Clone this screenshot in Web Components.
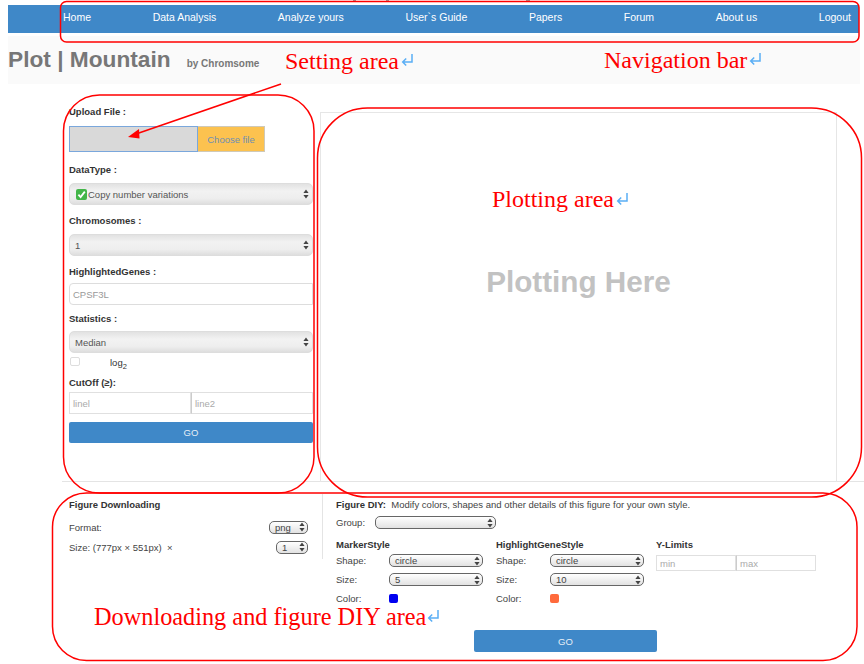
<!DOCTYPE html>
<html>
<head>
<meta charset="utf-8">
<title>Plot | Mountain</title>
<style>
  html, body { margin: 0; background: #fff; }
  body { font-family: "Liberation Sans", Arial, sans-serif; color: #333; }
</style>
</head>
<body>
<plot-page>
  <nav-bar></nav-bar>
  <title-band></title-band>
  <div slot="settings">
    <form-field label="Upload File :" top="21" gap="7"><file-box></file-box></form-field>
    <form-field label="DataType :" top="11">
      <big-select text="Copy number variations" check></big-select>
    </form-field>
    <form-field label="Chromosomes :" top="9"><big-select text="1"></big-select></form-field>
    <form-field label="HighlightedGenes :" top="9" gap="4"><text-box text="CPSF3L"></text-box></form-field>
    <form-field label="Statistics :" top="7" gap="5"><big-select text="Median"></big-select></form-field>
    <log-check></log-check>
    <form-field label="CutOff (≥):" top="4" gap="2"><pair-box a="linel" b="line2" h="22"></pair-box></form-field>
    <go-button width="244" height="21" top="8"></go-button>
  </div>
  <plot-area slot="plot"></plot-area>
  <bottom-tools slot="bottom"></bottom-tools>
  <red-notes></red-notes>
</plot-page>

<script>
//contenedor de toda la pagina
class PlotPage extends HTMLElement {
    constructor() {
        super();
        this.attachShadow({mode: "open"});
        this.shadowRoot.innerHTML = `
            <style>
                :host { display: block; position: relative; width: 864px; height: 664px; overflow: hidden; }
                .main { display: flex; height: 398px; border-bottom: 1px solid #e4e4e4; margin: 0 0 0 62px; width: 802px; box-sizing: border-box; }
                .left { width: 251px; padding-left: 7px; box-sizing: border-box; flex: none; }
                .right { padding: 28px 0 0 7px; flex: none; }
            </style>
            <slot></slot>
            <div class="main">
                <div class="left"><slot name="settings"></slot></div>
                <div class="right"><slot name="plot"></slot></div>
            </div>
            <slot name="bottom"></slot>
        `;
    }
}

class NavBar extends HTMLElement {
    constructor() {
        super();
        this.attachShadow({mode: "open"});
        const items = ["Home", "Data Analysis", "Analyze yours", "User`s Guide", "Papers", "Forum", "About us", "Logout"];
        this.shadowRoot.innerHTML = `
            <style>
                :host { display: block; padding: 5px 0 0 8px; width: 851px; }
                nav { display: flex; justify-content: space-between; height: 28px; box-sizing: border-box;
                      padding: 6px 8px 0 55px; background: #3f88c8; color: #fff; font-size: 10.5px; line-height: 13px; }
            </style>
            <nav>${items.map(i => `<span>${i}</span>`).join("")}</nav>
        `;
    }
}

class TitleBand extends HTMLElement {
    constructor() {
        super();
        this.attachShadow({mode: "open"});
        this.shadowRoot.innerHTML = `
            <style>
                :host { display: flex; align-items: baseline; margin: 3px 0 0 8px; width: 852px; height: 48px;
                        box-sizing: border-box; padding-top: 8px; background: #fafafa; color: #777; }
                h1 { margin: 0; font-size: 22.7px; line-height: 30px; font-weight: bold; }
                small { margin-left: 16px; font-size: 10px; font-weight: bold; }
            </style>
            <h1>Plot | Mountain</h1><small>by Chromsome</small>
        `;
    }
}

//etiqueta en negrita con su control debajo
class FormField extends HTMLElement {
    constructor() {
        super();
        this.attachShadow({mode: "open"});
    }
    connectedCallback() {
        this.shadowRoot.innerHTML = `
            <style>
                :host { display: block; margin-top: ${this.getAttribute("top") || 0}px; }
                label { display: block; font-size: 9.5px; line-height: 14px; font-weight: bold; color: #333;
                        margin-bottom: ${this.getAttribute("gap") || 6}px; }
            </style>
            <label>${this.getAttribute("label")}</label>
            <slot></slot>
        `;
    }
}

class FileBox extends HTMLElement {
    constructor() {
        super();
        this.attachShadow({mode: "open"});
        this.shadowRoot.innerHTML = `
            <style>
                :host { display: flex; width: 196px; height: 26px; font-size: 9.5px; }
                .path { flex: 1; background: #d9d9d9; border: 1px solid #7aa7dc; box-sizing: border-box; }
                .btn { width: 67px; background: #fcc24f; color: #6f8fb5; border: 1px solid #cfc9b8; border-left: 0;
                       box-sizing: border-box; display: flex; align-items: center; justify-content: center; }
            </style>
            <div class="path"></div><div class="btn">Choose file</div>
        `;
    }
}

const STEPPER = `<svg width="6" height="10" viewBox="0 0 6 10"><path d="M3 0.5 5.6 4H.4zM3 9.5.4 6h5.2z" fill="#444"/></svg>`;

class BigSelect extends HTMLElement {
    constructor() {
        super();
        this.attachShadow({mode: "open"});
    }
    connectedCallback() {
        const check = this.hasAttribute("check") ? `
            <svg class="tick" width="11" height="11" viewBox="0 0 11 11">
                <rect width="11" height="11" rx="2" fill="#43b649"/>
                <path d="M2.4 5.6 4.6 8 8.8 2.6" fill="none" stroke="#fff" stroke-width="1.8"/>
            </svg>` : "";
        this.shadowRoot.innerHTML = `
            <style>
                :host { display: flex; align-items: center; width: 244px; height: 22px; box-sizing: border-box;
                        padding: 0 3px 0 ${check ? 6 : 5}px; border: 1px solid #ddd; border-radius: 5px;
                        background: linear-gradient(#e2e2e2, #f2f2f2 35%, #eeeeee 72%, #dedede);
                        font-size: 9.5px; color: #555; }
                .tick { margin-right: 1px; }
                span { flex: 1; }
            </style>
            ${check}<span>${this.getAttribute("text")}</span>${STEPPER}
        `;
    }
}

class TextBox extends HTMLElement {
    constructor() {
        super();
        this.attachShadow({mode: "open"});
    }
    connectedCallback() {
        this.shadowRoot.innerHTML = `
            <style>
                :host { display: flex; align-items: center; width: 244px; height: 22px; box-sizing: border-box; padding-left: 3px;
                        border: 1px solid #ddd; border-radius: 4px 0 0 4px; font-size: 9.5px; color: #999; }
            </style>
            ${this.getAttribute("text")}
        `;
    }
}

//dos inputs pegados (linel/line2 y min/max)
class PairBox extends HTMLElement {
    constructor() {
        super();
        this.attachShadow({mode: "open"});
    }
    connectedCallback() {
        const w = this.getAttribute("w") || 122;
        this.shadowRoot.innerHTML = `
            <style>
                :host { display: flex; height: ${this.getAttribute("h")}px; font-size: 9.5px; color: #aaa; }
                div { width: ${w}px; box-sizing: border-box; display: flex; align-items: center; padding-left: 3px; border: 1px solid #e0e0e0; }
                div + div { border-left: 1px solid #ccc; }
            </style>
            <div>${this.getAttribute("a")}</div><div>${this.getAttribute("b")}</div>
        `;
    }
}

class LogCheck extends HTMLElement {
    constructor() {
        super();
        this.attachShadow({mode: "open"});
        this.shadowRoot.innerHTML = `
            <style>
                :host { display: flex; align-items: flex-start; height: 16px; margin-top: 3px; font-size: 9.5px; color: #333; }
                i { width: 8px; height: 7px; margin: 1px 0 0 1px; border: 1px solid #ddd; border-radius: 2px; }
                span { margin-left: 30px; line-height: 14px; }
                sub { font-size: 7.5px; line-height: 0; }
            </style>
            <i></i><span>log<sub>2</sub></span>
        `;
    }
}

class GoButton extends HTMLElement {
    constructor() {
        super();
        this.attachShadow({mode: "open"});
    }
    connectedCallback() {
        this.shadowRoot.innerHTML = `
            <style>
                :host { display: flex; align-items: center; justify-content: center; box-sizing: border-box;
                        width: ${this.getAttribute("width")}px; height: ${this.getAttribute("height")}px;
                        margin-top: ${this.getAttribute("top") || 0}px; background: #3f88c8; color: #e6eef6;
                        border-radius: 2px; font-size: 9.5px; }
            </style>
            GO
        `;
    }
}

class PlotArea extends HTMLElement {
    constructor() {
        super();
        this.attachShadow({mode: "open"});
        this.shadowRoot.innerHTML = `
            <style>
                :host { display: flex; justify-content: center; width: 517px; height: 370px; box-sizing: border-box;
                        border: 1px solid #e6e6e6; border-bottom: 0; padding-top: 151px; }
                span { font-size: 29.7px; line-height: 36px; font-weight: bold; color: #c2c2c2; }
            </style>
            <span>Plotting Here</span>
        `;
    }
}

//select pequeño de la zona inferior
class MiniSelect extends HTMLElement {
    constructor() {
        super();
        this.attachShadow({mode: "open"});
    }
    connectedCallback() {
        this.shadowRoot.innerHTML = `
            <style>
                :host { display: flex; align-items: center; box-sizing: border-box; width: ${this.getAttribute("width")}px; height: 13px;
                        padding: 0 2px 0 5px; border: 1px solid #666; border-radius: 5px;
                        background: linear-gradient(#fff, #e2e2e2); font-size: 9.5px; color: #444; }
                span { flex: 1; }
            </style>
            <span>${this.getAttribute("text") || ""}</span>${STEPPER}
        `;
    }
}

class StyleColumn extends HTMLElement {
    constructor() {
        super();
        this.attachShadow({mode: "open"});
    }
    connectedCallback() {
        const row = (name, body) => `<div class="row"><span class="name">${name}</span>${body}</div>`;
        this.shadowRoot.innerHTML = `
            <style>
                :host { display: block; width: 160px; flex: none; }
                b { display: block; font-size: 9.5px; line-height: 13px; color: #333; }
                .row { display: flex; align-items: center; height: 19px; font-size: 9.5px; color: #444; }
                .name { width: ${this.getAttribute("indent")}px; flex: none; }
                i { width: 9px; height: 9px; border-radius: 2px; background: ${this.getAttribute("color")}; }
            </style>
            <b>${this.getAttribute("title")}</b>
            ${row("Shape:", `<mini-select width="94" text="circle"></mini-select>`)}
            ${row("Size:", `<mini-select width="94" text="${this.getAttribute("size")}"></mini-select>`)}
            ${row("Color:", `<i></i>`)}
        `;
    }
}

class BottomTools extends HTMLElement {
    constructor() {
        super();
        this.attachShadow({mode: "open"});
        this.shadowRoot.innerHTML = `
            <style>
                :host { display: grid; grid-template-columns: 254px 1fr; padding: 12px 0 0 69px; font-size: 9.5px; color: #444; }
                b { color: #333; }
                .down { height: 65px; border-right: 1px solid #e4e4e4; padding-right: 14px; padding-top: 4px; box-sizing: border-box; }
                .down b { display: block; line-height: 13px; margin-bottom: 6px; }
                .line { display: flex; align-items: center; justify-content: space-between; height: 20px; }
                .diy { padding: 4px 0 0 13px; }
                .head { line-height: 13px; }
                .group { display: flex; align-items: center; height: 13px; margin-top: 5px; }
                .group span { width: 39px; }
                .cols { display: flex; margin-top: 9px; }
                .limits { width: 161px; }
                .limits b { display: block; line-height: 13px; margin-bottom: 4px; }
                .foot { display: flex; margin: 22px 0 0 138px; }
            </style>
            <div class="down">
                <b>Figure Downloading</b>
                <div class="line"><span>Format:</span><mini-select width="39" text="png"></mini-select></div>
                <div class="line"><span>Size: (777px × 551px) &nbsp;×</span><mini-select width="32" text="1"></mini-select></div>
            </div>
            <div class="diy">
                <div class="head"><b>Figure DIY:</b>&nbsp; Modify colors, shapes and other details of this figure for your own style.</div>
                <div class="group"><span>Group:</span><mini-select width="121"></mini-select></div>
                <div class="cols">
                    <style-column title="MarkerStyle" indent="53" size="5" color="#0000f0"></style-column>
                    <style-column title="HighlightGeneStyle" indent="54" size="10" color="#ff6a3c"></style-column>
                    <div class="limits"><b>Y-Limits</b><pair-box a="min" b="max" h="16" w="80"></pair-box></div>
                </div>
                <div class="foot"><go-button width="183" height="22"></go-button></div>
            </div>
        `;
    }
}

//anotaciones rojas que van encima de la captura
class RedNotes extends HTMLElement {
    constructor() {
        super();
        this.attachShadow({mode: "open"});
        const back = (x, y) => `<path transform="translate(${x} ${y})" d="M10 0V8H.8M4.2 4.4 .7 8 4.2 11.6" fill="none" stroke="#5aaef5" stroke-width="1.5"/>`;
        this.shadowRoot.innerHTML = `
            <style>
                :host { position: absolute; inset: 0; pointer-events: none; }
                svg { position: absolute; left: 0; top: 0; }
                span { position: absolute; font: 24px/28px "Liberation Serif", "Times New Roman", serif; color: #f00; white-space: nowrap; }
            </style>
            <svg width="864" height="664" fill="none" stroke="#f00" stroke-width="1.5">
                <path d="M353 0h3v1h-3zM386 0h3v1h-3zM526 0h4v1h-4z" fill="#999" stroke="none"/>
                <rect x="60.5" y="1.5" width="798.5" height="40.5" rx="6"/>
                <rect x="63.5" y="95" width="250.5" height="398" rx="36"/>
                <rect x="317.5" y="108" width="544" height="389" rx="50"/>
                <rect x="52.5" y="493" width="804.5" height="167.5" rx="34"/>
                <path d="M281 84 136 134"/>
                <path d="M128 137 139 129 139.5 138.5Z" fill="#f00" stroke="none"/>
                ${back(402, 54)}${back(750, 53)}${back(617, 193)}${back(428, 610)}
            </svg>
            <span style="left:285px;top:47px">Setting area</span>
            <span style="left:604px;top:46px">Navigation bar</span>
            <span style="left:492px;top:185px">Plotting area</span>
            <span style="left:94px;top:606px;font-size:24.3px;line-height:22px">Downloading and figure DIY area</span>
        `;
    }
}

customElements.define("plot-page", PlotPage);
customElements.define("nav-bar", NavBar);
customElements.define("title-band", TitleBand);
customElements.define("form-field", FormField);
customElements.define("file-box", FileBox);
customElements.define("big-select", BigSelect);
customElements.define("text-box", TextBox);
customElements.define("pair-box", PairBox);
customElements.define("log-check", LogCheck);
customElements.define("go-button", GoButton);
customElements.define("plot-area", PlotArea);
customElements.define("mini-select", MiniSelect);
customElements.define("style-column", StyleColumn);
customElements.define("bottom-tools", BottomTools);
customElements.define("red-notes", RedNotes);
</script>
</body>
</html>
